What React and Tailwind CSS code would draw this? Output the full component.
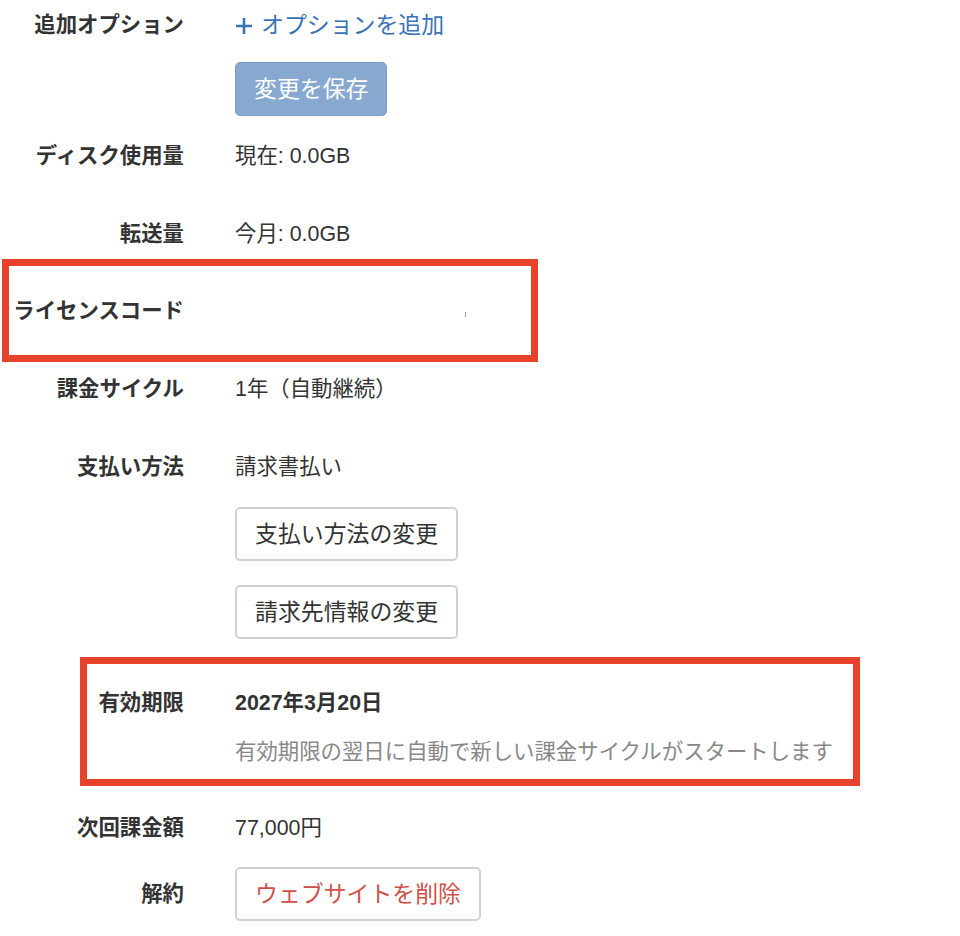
const font = { fontFamily: '"Liberation Sans", "Noto Sans CJK JP", sans-serif' }

const Row = ({ label, labelWidth = 'w-[184px]', children, className = '' }) => (
  <div className={`flex items-center h-[50px] ${className}`}>
    <div className={`${labelWidth} shrink-0 text-right font-bold text-[#333] whitespace-nowrap`}>{label}</div>
    <div className="ml-[51px] text-[#333]">{children}</div>
  </div>
)

const OutlineButton = ({ children, className = '', danger }) => (
  <button
    className={`h-[54px] px-[18px] rounded-[5px] border-2 border-[#d2d2d2] bg-white text-[22.9px] leading-none whitespace-nowrap ${
      danger ? 'text-[#d0504a]' : 'text-[#333]'
    } ${className}`}
  >
    {children}
  </button>
)

export default function App() {
  return (
    <div className="w-[960px] h-[936px] bg-white text-[21.4px] leading-[30px] overflow-hidden" style={font}>
      <Row label="追加オプション">
        <a className="flex items-center text-[#3a73b5] text-[22.9px]">
          <svg className="mr-[8px] mt-[1px]" width="18" height="18" viewBox="0 0 18 18">
            <path d="M9 1v16M1 9h16" stroke="currentColor" strokeWidth="2.6" fill="none" />
          </svg>
          オプションを追加
        </a>
      </Row>

      <div className="mt-[12px] ml-[235px]">
        <button className="h-[54px] px-[18px] rounded-[5px] border border-[#7c9dc6] bg-[#87a8cf] text-white text-[22.9px] leading-none">
          変更を保存
        </button>
      </div>

      <Row label="ディスク使用量" className="mt-[15px]">
        現在: 0.0GB
      </Row>

      <Row label="転送量" className="mt-[28px]">
        今月: 0.0GB
      </Row>

      <div className="ml-[2px] w-[536px] h-[103px] border-[7px] border-[#e8412c] flex items-center">
        <div className="flex items-center w-full">
          <div className="w-[175px] shrink-0 text-right font-bold text-[#333] whitespace-nowrap">ライセンスコード</div>
          <div className="ml-[281px] mt-[8px] w-px h-[5px] bg-[#9a9a9a]"></div>
        </div>
      </div>

      <Row label="課金サイクル" className="mt-[2px]">
        1年（自動継続）
      </Row>

      <Row label="支払い方法" className="mt-[28px]">
        請求書払い
      </Row>

      <div className="mt-[15px] ml-[235px]">
        <OutlineButton>支払い方法の変更</OutlineButton>
      </div>
      <div className="mt-[24px] ml-[235px]">
        <OutlineButton>請求先情報の変更</OutlineButton>
      </div>

      <div className="mt-[18px] ml-[80px] w-[780px] h-[129px] border-[7px] border-[#e8412c] pt-[20px]">
        <div className="flex items-center h-[38px]">
          <div className="w-[97px] shrink-0 text-right font-bold text-[#333]">有効期限</div>
          <div className="ml-[51px] font-bold text-[#333]">2027年3月20日</div>
        </div>
        <div className="ml-[148px] mt-[15px] text-[#888] whitespace-nowrap">
          有効期限の翌日に自動で新しい課金サイクルがスタートします
        </div>
      </div>

      <Row label="次回課金額" className="mt-[17px]">
        77,000円
      </Row>

      <div className="flex items-center mt-[14px]">
        <div className="w-[184px] shrink-0 text-right font-bold text-[#333]">解約</div>
        <div className="ml-[51px]">
          <OutlineButton danger>ウェブサイトを削除</OutlineButton>
        </div>
      </div>
    </div>
  )
}
